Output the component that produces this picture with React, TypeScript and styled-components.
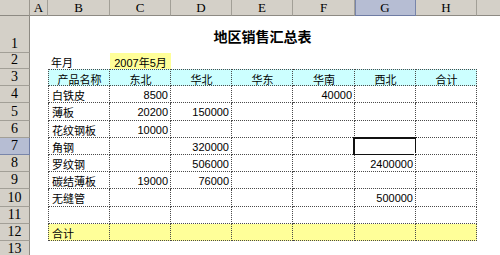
import React from "react";
import styled, { createGlobalStyle, css } from "styled-components";

const GlobalStyle = createGlobalStyle`
  html, body { margin: 0; padding: 0; background: #ffffff; overflow: hidden; }
  * { box-sizing: border-box; }
`;

const Sheet = styled.div`
  display: grid;
  grid-template-columns: 30px 18px 62px 61px 61px 61px 62px 61px 61px 40px;
  grid-template-rows: 16px 37px 16px repeat(10, 17.2px) 17px;
  width: 500px;
  height: 255px;
  overflow: hidden;
  font-family: "Liberation Sans", "Noto Sans CJK SC", sans-serif;
  font-size: 11px;
  color: #000;
`;

const Corner = styled.div`
  background: #d4d0c8;
  border-right: 1px solid #9b978f;
  border-bottom: 1px solid #8d8a83;
`;

const ColHead = styled.div<{ $sel?: boolean }>`
  display: flex;
  align-items: center;
  justify-content: center;
  font-family: "Liberation Serif", "DejaVu Serif", serif;
  font-size: 13px;
  padding-top: 1px;
  background: ${(p) => (p.$sel ? "#b6bdd3" : "#d4d0c8")};
  border-right: 1px solid ${(p) => (p.$sel ? "#7885aa" : "#a29f97")};
  border-bottom: 1px solid ${(p) => (p.$sel ? "#6f7ca3" : "#8d8a83")};
  ${(p) => p.$sel && css`box-shadow: inset 1px 0 0 #7885aa;`}
`;

const RowHead = styled.div<{ $sel?: boolean }>`
  display: flex;
  align-items: flex-end;
  justify-content: center;
  font-family: "Liberation Serif", "DejaVu Serif", serif;
  font-size: 14px;
  line-height: 14px;
  padding-bottom: 1px;
  background: ${(p) => (p.$sel ? "#b6bdd3" : "#d4d0c8")};
  border-right: 1px solid ${(p) => (p.$sel ? "#6f7ca3" : "#8d8a83")};
  border-bottom: 1px solid ${(p) => (p.$sel ? "#7885aa" : "#a29f97")};
`;

const Blank = styled.div``;

const Title = styled.div`
  grid-column: 3 / 10;
  display: flex;
  align-items: center;
  justify-content: center;
  padding-top: 2px;
  font-family: "Noto Sans CJK SC", sans-serif;
  font-weight: 700;
  font-size: 14px;
`;

const Label = styled.div<{ $bg?: string; $align?: "left" | "right" | "center" }>`
  display: flex;
  align-items: center;
  padding: 1px 3px 0 3px;
  white-space: nowrap;
  background: ${(p) => p.$bg || "transparent"};
  justify-content: ${(p) =>
    p.$align === "right" ? "flex-end" : p.$align === "center" ? "center" : "flex-start"};
`;

const Cell = styled.div<{
  $bg?: string;
  $align?: "left" | "right" | "center";
  $first?: boolean;
  $top?: boolean;
}>`
  position: relative;
  display: flex;
  align-items: center;
  padding: 2px 2px 0 3px;
  white-space: nowrap;
  background: ${(p) => p.$bg || "#ffffff"};
  justify-content: ${(p) =>
    p.$align === "right" ? "flex-end" : p.$align === "center" ? "center" : "flex-start"};
  border-right: 1px dotted #4a4a4a;
  border-bottom: 1px dotted #4a4a4a;
  ${(p) => p.$first && css`border-left: 1px dotted #4a4a4a;`}
  ${(p) => p.$top && css`border-top: 1px dotted #4a4a4a;`}
`;

const Selection = styled.div`
  position: absolute;
  top: -1px;
  left: -2px;
  right: -2px;
  bottom: -2px;
  border: 2px solid #111;
  pointer-events: none;
`;

const Handle = styled.div`
  position: absolute;
  right: -5px;
  bottom: -5px;
  width: 6px;
  height: 6px;
  background: #111;
  border: 1px solid #fff;
`;

const cols = ["A", "B", "C", "D", "E", "F", "G", "H", ""];
const headers = ["产品名称", "东北", "华北", "华东", "华南", "西北", "合计"];
const data: string[][] = [
  ["白铁皮", "8500", "", "", "40000", "", ""],
  ["薄板", "20200", "150000", "", "", "", ""],
  ["花纹钢板", "10000", "", "", "", "", ""],
  ["角钢", "", "320000", "", "", "", ""],
  ["罗纹钢", "", "506000", "", "", "2400000", ""],
  ["碳结薄板", "19000", "76000", "", "", "", ""],
  ["无缝管", "", "", "", "", "500000", ""],
  ["", "", "", "", "", "", ""],
];

export default function App() {
  return (
    <>
      <GlobalStyle />
      <Sheet>
        <Corner />
        {cols.map((c, i) => (
          <ColHead key={i} $sel={c === "G"}>
            {c}
          </ColHead>
        ))}

        <RowHead>1</RowHead>
        <Blank />
        <Title>地区销售汇总表</Title>
        <Blank />

        <RowHead>2</RowHead>
        <Blank />
        <Label>年月</Label>
        <Label $bg="#ffff99" $align="center">2007年5月</Label>
        <Blank />
        <Blank />
        <Blank />
        <Blank />
        <Blank />
        <Blank />

        <RowHead>3</RowHead>
        <Blank />
        {headers.map((h, i) => (
          <Cell key={i} $bg="#ccffff" $align="center" $first={i === 0} $top>
            {h}
          </Cell>
        ))}
        <Blank />

        {data.map((row, r) => (
          <React.Fragment key={r}>
            <RowHead $sel={r === 3}>{r + 4}</RowHead>
            <Blank />
            {row.map((v, i) => (
              <Cell key={i} $align={i === 0 ? "left" : "right"} $first={i === 0}>
                {v}
                {r === 3 && i === 5 && (
                  <Selection>
                    <Handle />
                  </Selection>
                )}
              </Cell>
            ))}
            <Blank />
          </React.Fragment>
        ))}

        <RowHead>12</RowHead>
        <Blank />
        {headers.map((_, i) => (
          <Cell key={i} $bg="#ffff99" $first={i === 0}>
            {i === 0 ? "合计" : ""}
          </Cell>
        ))}
        <Blank />

        <RowHead>13</RowHead>
      </Sheet>
    </>
  );
}
